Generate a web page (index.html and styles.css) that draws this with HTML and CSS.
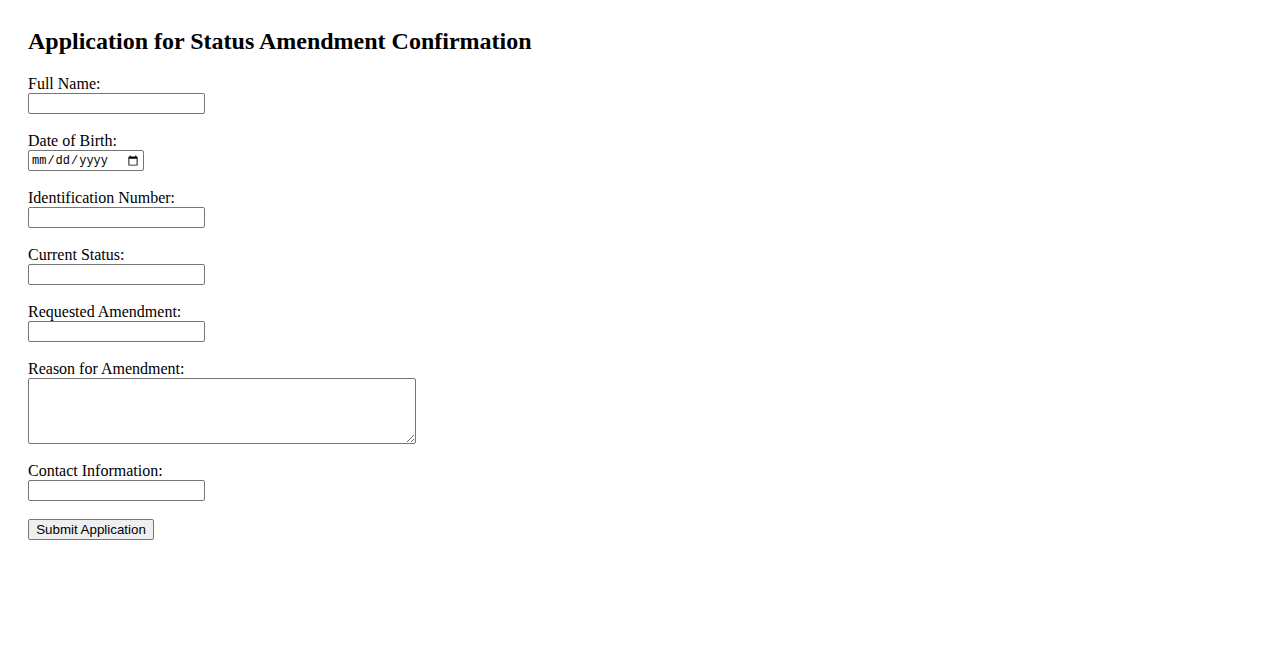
FILE: index.html
```html
<!DOCTYPE html>
<html lang="en">
<head>
<meta charset="utf-8">
<title>Application for Status Amendment Confirmation</title>
<link rel="stylesheet" href="styles.css">
</head>
<body>
<div class="page">
  <h2 class="title">Application for Status Amendment Confirmation</h2>
  <form class="form">
    <div class="field">
      <label class="label" for="name">Full Name:</label>
      <input class="text" type="text" id="name">
    </div>
    <div class="field">
      <label class="label" for="dob">Date of Birth:</label>
      <input class="date" type="date" id="dob">
    </div>
    <div class="field">
      <label class="label" for="idnum">Identification Number:</label>
      <input class="text" type="text" id="idnum">
    </div>
    <div class="field">
      <label class="label" for="status">Current Status:</label>
      <input class="text" type="text" id="status">
    </div>
    <div class="field">
      <label class="label" for="amend">Requested Amendment:</label>
      <input class="text" type="text" id="amend">
    </div>
    <div class="field">
      <label class="label" for="reason">Reason for Amendment:</label>
      <textarea class="area" id="reason"></textarea>
    </div>
    <div class="field">
      <label class="label" for="contact">Contact Information:</label>
      <input class="text" type="text" id="contact">
    </div>
    <div class="field">
      <button class="submit" type="submit">Submit Application</button>
    </div>
  </form>
</div>
</body>
</html>
```

FILE: styles.css
```css
html, body {
  margin: 0;
  padding: 0;
  background: #ffffff;
}
body {
  font-family: "Liberation Serif", "Times New Roman", serif;
  font-size: 16px;
  color: #000000;
}
.page {
  padding: 28px 28px;
}
.title {
  margin: 0 0 20px 0;
  font-size: 24px;
  line-height: 27px;
  font-weight: bold;
}
.form {
  display: flex;
  flex-direction: column;
  align-items: flex-start;
}
.field {
  display: flex;
  flex-direction: column;
  align-items: flex-start;
  margin-bottom: 18px;
}
.label {
  display: block;
  height: 18px;
  line-height: 18px;
}
.text, .date, .area {
  box-sizing: border-box;
  margin: 0;
  border: 1px solid #767676;
  border-radius: 2px;
  padding: 1px 2px;
  background: #ffffff;
  font-family: "Liberation Sans", Arial, sans-serif;
  font-size: 13.33px;
}
.text {
  width: 177px;
  height: 21px;
}
.date {
  width: 116px;
  height: 21px;
  font-family: "Liberation Mono", "Courier New", monospace;
  font-size: 12px;
}
.area {
  width: 388px;
  height: 66px;
  resize: both;
}
.submit {
  box-sizing: border-box;
  margin: 0;
  height: 21px;
  width: 126px;
  padding: 1px 6px;
  border: 1px solid #767676;
  border-radius: 2px;
  background: #efefef;
  color: #000000;
  font-family: "Liberation Sans", Arial, sans-serif;
  font-size: 13.33px;
  line-height: 15px;
}
```
